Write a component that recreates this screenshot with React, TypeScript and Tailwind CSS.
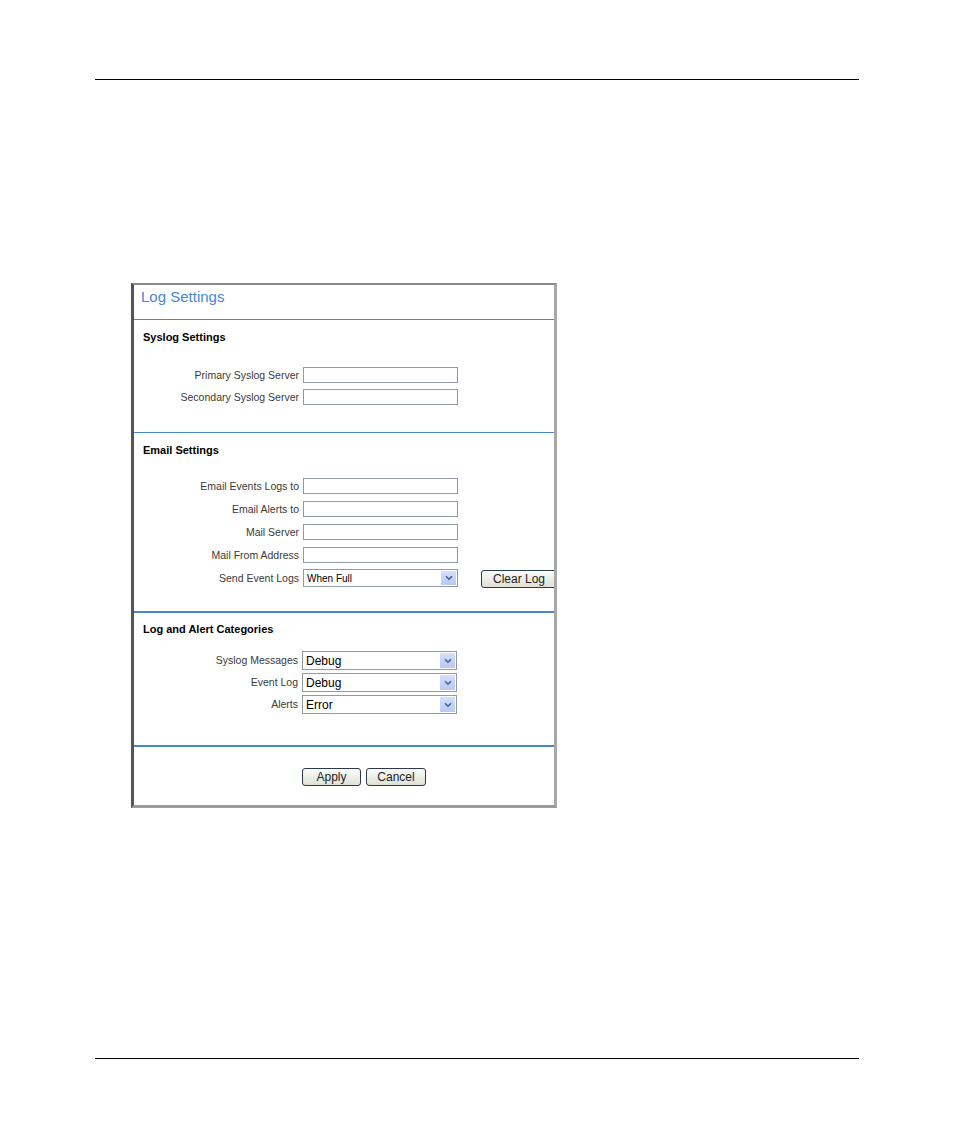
import React from "react";

const font = { fontFamily: '"Liberation Sans", Arial, sans-serif' };

const Label = ({ children }: { children: React.ReactNode }) => (
  <div className="w-[169px] shrink-0 pr-[4px] text-right text-[10.5px] leading-[16px] text-[#3a3a3a]">
    {children}
  </div>
);

const TextRow = ({ label }: { label: string }) => (
  <div className="flex items-center h-[16px]">
    <Label>{label}</Label>
    <div className="w-[155px] h-[16px] shrink-0 border border-[#8e9aa6] bg-white" />
  </div>
);

const Chevron = () => (
  <div className="absolute right-[1px] top-[1px] bottom-[1px] w-[15px] bg-gradient-to-b from-[#d4e0fb] to-[#b6c8f6] flex items-center justify-center">
    <svg width="8" height="6" viewBox="0 0 8 6">
      <path d="M1 1.2 L4 4.2 L7 1.2" fill="none" stroke="#4a5f8c" strokeWidth="1.6" />
    </svg>
  </div>
);

const SelectBox = ({
  value,
  small,
  height,
}: {
  value: string;
  small?: boolean;
  height: string;
}) => (
  <div
    className={`relative w-[155px] shrink-0 ${height} border border-[#8e9aa6] bg-white flex items-center pl-[3px] text-black ${
      small ? "text-[10px]" : "text-[12px]"
    }`}
  >
    {value}
    <Chevron />
  </div>
);

const SelectRow = ({ label, value }: { label: string; value: string }) => (
  <div className="flex items-center h-[19px]">
    <div className="w-[168px] shrink-0 pr-[4px] text-right text-[10.5px] text-[#3a3a3a]">
      {label}
    </div>
    <SelectBox value={value} height="h-[19px]" />
  </div>
);

const XpButton = ({ label, width }: { label: string; width: string }) => (
  <div
    className={`${width} h-[18px] shrink-0 border border-[#2a3a4a] rounded-[3px] bg-gradient-to-b from-[#fbfbf9] to-[#e0e0d8] flex items-center justify-center text-[12px] text-[#222]`}
  >
    {label}
  </div>
);

const Heading = ({ children }: { children: React.ReactNode }) => (
  <div className="pl-[9px] text-[11px] font-bold leading-[14px] text-black">
    {children}
  </div>
);

export default function App() {
  return (
    <div className="w-[954px] h-[1145px] bg-white pt-[79px] px-[95px]" style={font}>
      <div className="h-px bg-black" />

      <div className="mt-[203px] ml-[36px] w-[426px] h-[525px] border-t-2 border-t-[#8a8a8a] border-l-[3px] border-l-[#555] border-r-[3px] border-r-[#a8a8a8] border-b-[3px] border-b-[#9a9a9a] overflow-hidden flex flex-col">
        {/* title */}
        <div className="h-[34px] pt-[3px] pl-[7px] text-[15px] leading-[17px] text-[#4886d8]">
          Log Settings
        </div>
        <div className="h-px bg-[#4a86d0]" />

        {/* syslog */}
        <div className="mt-[10px]">
          <Heading>Syslog Settings</Heading>
        </div>
        <div className="mt-[23px] flex flex-col gap-[6px]">
          <TextRow label="Primary Syslog Server" />
          <TextRow label="Secondary Syslog Server" />
        </div>
        <div className="mt-[27px] h-px bg-[#4a86d0]" />

        {/* email */}
        <div className="mt-[10px]">
          <Heading>Email Settings</Heading>
        </div>
        <div className="mt-[21px] flex flex-col gap-[7px]">
          <TextRow label="Email Events Logs to" />
          <TextRow label="Email Alerts to" />
          <TextRow label="Mail Server" />
          <TextRow label="Mail From Address" />
        </div>
        <div className="mt-[6px] flex items-center h-[18px]">
          <Label>Send Event Logs</Label>
          <SelectBox value="When Full" small height="h-[18px]" />
          <div className="ml-[23px] mt-[2px] shrink-0">
            <XpButton label="Clear Log" width="w-[76px]" />
          </div>
        </div>
        <div className="mt-[24px] h-[2px] bg-[#4a86d0]" />

        {/* categories */}
        <div className="mt-[9px]">
          <Heading>Log and Alert Categories</Heading>
        </div>
        <div className="mt-[15px] flex flex-col gap-[3px]">
          <SelectRow label="Syslog Messages" value="Debug" />
          <SelectRow label="Event Log" value="Debug" />
          <SelectRow label="Alerts" value="Error" />
        </div>
        <div className="mt-[31px] h-[2px] bg-[#4a86d0]" />

        {/* actions */}
        <div className="mt-[21px] flex gap-[5px] pl-[168px]">
          <XpButton label="Apply" width="w-[59px]" />
          <XpButton label="Cancel" width="w-[60px]" />
        </div>
      </div>

      <div className="mt-[250px] h-px bg-black" />
    </div>
  );
}
